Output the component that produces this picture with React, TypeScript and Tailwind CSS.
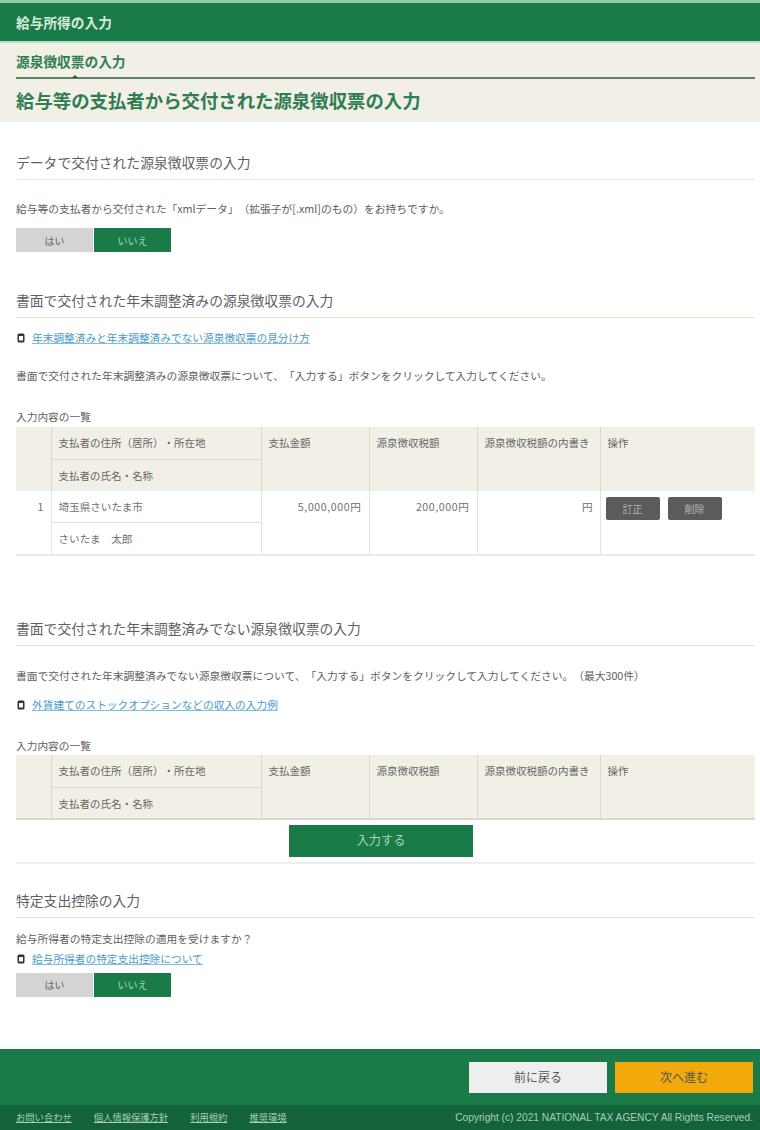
import React from "react";

const FONT = { fontFamily: '"Noto Sans CJK JP", "Liberation Sans", sans-serif' };

function Heading({ children }: { children: React.ReactNode }) {
  return (
    <h2 className="h-[26px] border-b border-[#ece3c8] text-[13.8px] leading-[16px] text-[#5f5f5f] font-normal">
      {children}
    </h2>
  );
}

function Doc() {
  return (
    <svg width="8" height="10" viewBox="0 0 8 10" className="shrink-0 ml-px">
      <rect x="0.5" y="0.5" width="7" height="9" rx="1.5" fill="#333333" />
      <rect x="2" y="3" width="4" height="4.5" fill="#ffffff" />
    </svg>
  );
}

function DocLink({ children }: { children: React.ReactNode }) {
  return (
    <div className="flex items-center gap-[7px] h-[16px]">
      <Doc />
      <a className="text-[10.7px] leading-[14px] text-[#4a9ac8] underline decoration-[#7fc0e2]">{children}</a>
    </div>
  );
}

function YesNo() {
  return (
    <div className="flex gap-px text-[10px]">
      <div className="w-[77px] h-[24px] flex items-center justify-center bg-[#d4d4d4] text-[#666666]">はい</div>
      <div className="w-[77px] h-[24px] flex items-center justify-center bg-[#1a7a48] text-[#a9d6ba]">いいえ</div>
    </div>
  );
}

const th = "border-l border-[#dcd8cb] bg-[#f1efe6] px-[7px] py-[6px] align-top font-normal text-left text-[10.5px] leading-[20px] text-[#666666]";
const td = "border-l border-[#e2e2e2] px-[7px] pt-[6px] pb-[4px] align-top text-[10.6px] leading-[20px] text-[#707070]";
const amount = " text-right tracking-[0.6px]";

function TableHead() {
  return (
    <thead>
      <tr className="h-[32px]">
        <th rowSpan={2} className="bg-[#f1efe6]" />
        <th className={th + " border-b"}>支払者の住所（居所）・所在地</th>
        <th rowSpan={2} className={th}>支払金額</th>
        <th rowSpan={2} className={th}>源泉徴収税額</th>
        <th rowSpan={2} className={th}>源泉徴収税額の内書き</th>
        <th rowSpan={2} className={th}>操作</th>
      </tr>
      <tr className="h-[31px]">
        <th className="border-l border-[#dcd8cb] bg-[#f1efe6] px-[7px] pt-[6px] pb-[4px] align-top font-normal text-left text-[10.5px] leading-[20px] text-[#666666]">支払者の氏名・名称</th>
      </tr>
    </thead>
  );
}

function Cols() {
  return (
    <colgroup>
      <col className="w-[35px]" />
      <col className="w-[210px]" />
      <col className="w-[108px]" />
      <col className="w-[108px]" />
      <col className="w-[123px]" />
      <col className="w-[155px]" />
    </colgroup>
  );
}

export default function App() {
  return (
    <div style={FONT} className="w-[760px] h-[1130px] bg-white flex flex-col overflow-hidden [text-spacing-trim:space-all]">
      <div className="h-[3px] bg-[#8fcca8]" />
      <div className="h-[38px] bg-[#1a7a48] flex items-center px-4 text-[13.7px] font-bold text-[#d5ecdd]">給与所得の入力</div>
      <div className="h-[2px] bg-[#b5e2c6]" />

      <div className="h-[79px] bg-[#f1efe6] pl-4 pr-[5px] relative">
        <div className="h-[36px] border-b-2 border-[#5d8069] pt-[9px] text-[13.7px] leading-[18px] font-bold text-[#2f7d52]">源泉徴収票の入力</div>
        <div className="absolute left-[72px] top-[32px] w-0 h-0 border-x-[3px] border-x-transparent border-b-[3px] border-b-[#1f5a3a]" />
        <h1 className="pt-[9px] text-[18.4px] leading-[24px] font-bold text-[#2f7d52]">給与等の支払者から交付された源泉徴収票の入力</h1>
      </div>

      <main className="flex-1 pl-4 pr-[5px] pt-[32px]">
        <Heading>データで交付された源泉徴収票の入力</Heading>
        <p className="mt-[22px] text-[10.75px] leading-[14px] text-[#606060]">給与等の支払者から交付された「xmlデータ」（拡張子が[.xml]のもの）をお持ちですか。</p>
        <div className="mt-[12px]"><YesNo /></div>

        <div className="mt-[40px]"><Heading>書面で交付された年末調整済みの源泉徴収票の入力</Heading></div>
        <div className="mt-[12px]"><DocLink>年末調整済みと年末調整済みでない源泉徴収票の見分け方</DocLink></div>
        <p className="mt-[23px] text-[10.75px] leading-[14px] text-[#606060]">書面で交付された年末調整済みの源泉徴収票について、「入力する」ボタンをクリックして入力してください。</p>
        <p className="mt-[27px] h-[17px] text-[10.7px] leading-[14px] text-[#606060]">入力内容の一覧</p>
        <table className="table-fixed border-collapse w-[739px] border-b-2 border-[#e9e9e9]">
          <Cols />
          <TableHead />
          <tbody>
            <tr className="h-[32px]">
              <td rowSpan={2} className="px-[7px] pt-[6px] pb-[4px] align-top text-right text-[10.6px] leading-[20px] text-[#707070]">1</td>
              <td className={td + " border-b"}>埼玉県さいたま市</td>
              <td rowSpan={2} className={td + amount}>5,000,000円</td>
              <td rowSpan={2} className={td + amount}>200,000円</td>
              <td rowSpan={2} className={td + " text-right"}>円</td>
              <td rowSpan={2} className="border-l border-[#e2e2e2] px-[5px] py-[6px] align-top">
                <div className="flex gap-[8px]">
                  <span className="w-[54px] h-[23px] flex items-center justify-center rounded-[2px] bg-[#5b5b5b] text-[10px] text-[#b5b5b5]">訂正</span>
                  <span className="w-[54px] h-[23px] flex items-center justify-center rounded-[2px] bg-[#5b5b5b] text-[10px] text-[#b5b5b5]">削除</span>
                </div>
              </td>
            </tr>
            <tr className="h-[32px]">
              <td className={td}>さいたま　太郎</td>
            </tr>
          </tbody>
        </table>

        <div className="mt-[64px]"><Heading>書面で交付された年末調整済みでない源泉徴収票の入力</Heading></div>
        <p className="mt-[23px] text-[10.75px] leading-[14px] text-[#606060]">書面で交付された年末調整済みでない源泉徴収票について、「入力する」ボタンをクリックして入力してください。（最大300件）</p>
        <div className="mt-[14px]"><DocLink>外貨建てのストックオプションなどの収入の入力例</DocLink></div>
        <p className="mt-[26px] h-[16px] text-[10.7px] leading-[14px] text-[#606060]">入力内容の一覧</p>
        <table className="table-fixed border-collapse w-[739px] border-b-2 border-[#dcd8cb]">
          <Cols />
          <TableHead />
        </table>
        <div className="mt-[5px] flex justify-center pr-[9px] pb-[5px] border-b-2 border-[#eeeeee]">
          <div className="w-[184px] h-[32px] flex items-center justify-center bg-[#1a7a48] text-[12.2px] text-[#a9d6ba]">入力する</div>
        </div>

        <div className="mt-[28px]"><Heading>特定支出控除の入力</Heading></div>
        <p className="mt-[14px] text-[10.75px] leading-[14px] text-[#606060]">給与所得者の特定支出控除の適用を受けますか？</p>
        <div className="mt-[5px]"><DocLink>給与所得者の特定支出控除について</DocLink></div>
        <div className="mt-[6px]"><YesNo /></div>
      </main>

      <div className="h-[56px] bg-[#1a7a48] flex items-center justify-end gap-[8px] pr-[7px]">
        <div className="w-[138px] h-[31px] flex items-center justify-center bg-[#eeeeee] text-[12px] text-[#555555]">前に戻る</div>
        <div className="w-[138px] h-[31px] flex items-center justify-center bg-[#f2a90c] text-[12px] text-[#555555]">次へ進む</div>
      </div>
      <footer className="h-[25px] bg-[#12633a] flex items-center justify-between pl-4 pr-[7px] text-[9.3px] text-[#a9cdb8]">
        <div className="flex gap-[22px] underline">
          <span>お問い合わせ</span>
          <span>個人情報保護方針</span>
          <span>利用規約</span>
          <span>推奨環境</span>
        </div>
        <span className="font-['Liberation_Sans'] text-[10.2px]">Copyright (c) 2021 NATIONAL TAX AGENCY All Rights Reserved.</span>
      </footer>
    </div>
  );
}
